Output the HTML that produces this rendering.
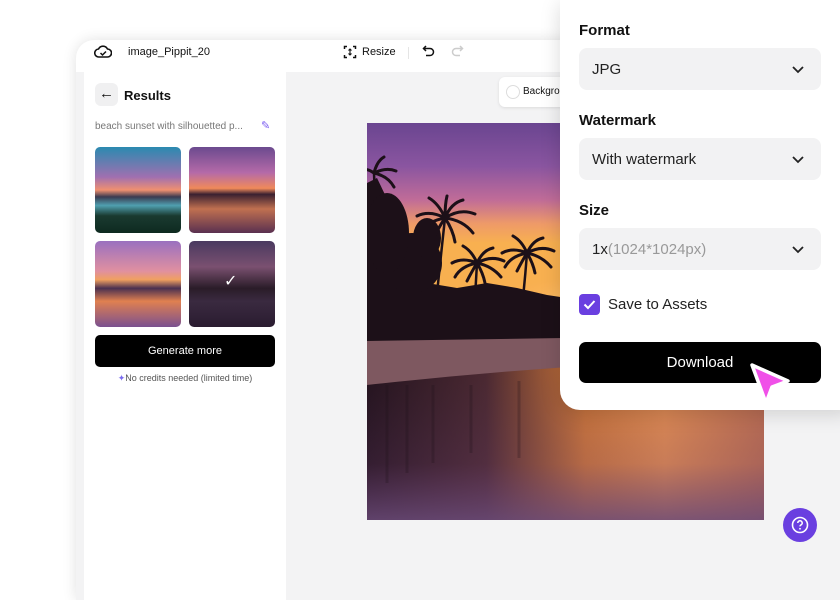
<!DOCTYPE html>
<html><head><style>
*{margin:0;padding:0;box-sizing:border-box}
body{width:840px;height:560px;background:#fff;font-family:"Liberation Sans",sans-serif;position:relative;overflow:hidden;color:#111}
.win{position:absolute;left:76px;top:40px;width:800px;height:560px;background:#f3f3f4;border-radius:18px 0 0 0;box-shadow:0 0 14px rgba(0,0,0,.12);overflow:hidden}
.hdr{position:absolute;left:0;top:0;right:0;height:32px;background:#fff}
.left{position:absolute;left:8px;top:32px;width:202px;bottom:0;background:#fff}
.thumb{position:absolute;width:86px;height:86px;border-radius:5px;overflow:hidden}
.pop{position:absolute;left:560px;top:0;width:290px;height:410px;background:#fff;border-radius:0 0 0 20px;box-shadow:0 4px 20px rgba(0,0,0,.15)}
.lbl{position:absolute;left:19px;font-size:15px;font-weight:bold;color:#111}
.sel{position:absolute;left:19px;width:242px;height:42px;background:#f2f2f3;border-radius:8px;font-size:15px;padding:13px 13px;color:#222}
.chev{position:absolute;right:16px;top:14px}
</style></head><body>
<div class="win">
 <div class="hdr">
  <svg style="position:absolute;left:18px;top:4px" width="18" height="16" viewBox="0 0 18 16"><path d="M5 13a4 4 0 0 1-.5-8A5 5 0 0 1 13.5 5a4 4 0 0 1 0 8z" fill="none" stroke="#111" stroke-width="1.6"/><path d="M6.5 9l2 2 3.5-3.5" fill="none" stroke="#111" stroke-width="1.5"/></svg>
  <div style="position:absolute;left:52px;top:6px;font-size:11px">image_Pippit_20</div>
  <svg style="position:absolute;left:267px;top:5px" width="14" height="14"><path d="M1.5 4V1.5H4M10 1.5h2.5V4M1.5 10v2.5H4M10 12.5h2.5V10" fill="none" stroke="#111" stroke-width="1.5"/><path d="M7 4v6M5.5 5.5L7 4l1.5 1.5M5.5 8.5L7 10l1.5-1.5" fill="none" stroke="#111" stroke-width="1.1"/></svg>
  <div style="position:absolute;left:286px;top:6px;font-size:11px">Resize</div>
  <div style="position:absolute;left:332px;top:7px;width:1px;height:12px;background:#e5e5e5"></div>
  <svg style="position:absolute;left:346px;top:4px" width="14" height="14"><path d="M4 2L1.5 4.5 4 7M1.5 4.5H8a3.5 3.5 0 0 1 0 7H4" fill="none" stroke="#111" stroke-width="1.5"/></svg>
  <svg style="position:absolute;left:374px;top:4px" width="14" height="14"><path d="M10 2l2.5 2.5L10 7M12.5 4.5H6a3.5 3.5 0 0 0 0 7h4" fill="none" stroke="#ccc" stroke-width="1.5"/></svg>
 </div>
 <div class="left">
  <div style="position:absolute;left:11px;top:11px;width:23px;height:23px;background:#f0f0f1;border-radius:6px;font-size:15px;text-align:center;line-height:22px">←</div>
  <div style="position:absolute;left:40px;top:16px;font-size:13px;font-weight:bold">Results</div>
  <div style="position:absolute;left:11px;top:49px;font-size:10px;color:#777">beach sunset with silhouetted p...</div>
  <div style="position:absolute;left:177px;top:47px;font-size:11px;color:#7a5cf0">✎</div>
  <div class="thumb" style="left:11px;top:75px;background:linear-gradient(180deg,#2a8ab0 0%,#a070b0 35%,#f09070 50%,#3a3a50 58%,#50a0b0 68%,#1a3a30 80%,#0e2a20 100%)"></div>
  <div class="thumb" style="left:105px;top:75px;background:linear-gradient(180deg,#6b4a8e 0%,#b56aa8 30%,#f08a5a 48%,#3a2030 55%,#c07050 72%,#5a3050 100%)"></div>
  <div class="thumb" style="left:11px;top:169px;background:linear-gradient(180deg,#9a70c0 0%,#e090a0 35%,#f0a060 45%,#4a3050 55%,#e08050 70%,#7a5090 100%)"></div>
  <div class="thumb" style="left:105px;top:169px;background:linear-gradient(180deg,#4a3a60 0%,#7a5070 30%,#2a1c28 55%,#3a2a40 70%,#2a1c30 100%)"><div style="position:absolute;left:35px;top:30px;color:#fff;font-size:16px">✓</div></div>
  <div style="position:absolute;left:11px;top:263px;width:180px;height:32px;background:#000;border-radius:5px;color:#fff;font-size:11px;text-align:center;line-height:32px">Generate more</div>
  <div style="position:absolute;left:0;width:202px;top:301px;font-size:9px;color:#555;text-align:center"><span style="color:#7a6cf0">✦</span>No credits needed (limited time)</div>
 </div>
 <div style="position:absolute;left:423px;top:37px;width:100px;height:30px;background:#fff;border-radius:6px;box-shadow:0 1px 3px rgba(0,0,0,.1)"><div style="position:absolute;left:7px;top:8px;width:14px;height:14px;border:1px solid #ddd;border-radius:50%"></div><div style="position:absolute;left:24px;top:9px;font-size:10px">Background</div></div>
</div>
<svg style="position:absolute;left:367px;top:123px" width="397" height="397">
 <defs>
  <linearGradient id="sky" x1="0" y1="0" x2="0" y2="1"><stop offset="0" stop-color="#6a4590"/><stop offset=".18" stop-color="#8a55a0"/><stop offset=".32" stop-color="#c06c98"/><stop offset=".42" stop-color="#ee9a68"/><stop offset=".5" stop-color="#f8b050"/></linearGradient>
  <linearGradient id="wat" x1="0" y1="0" x2="1" y2="0"><stop offset="0" stop-color="#22121c"/><stop offset=".3" stop-color="#4a2830"/><stop offset=".55" stop-color="#d07838"/><stop offset=".75" stop-color="#e89050"/><stop offset="1" stop-color="#c07050"/></linearGradient>
  <linearGradient id="wv" x1="0" y1="0" x2="0" y2="1"><stop offset="0" stop-color="#5a3a60" stop-opacity="0"/><stop offset=".65" stop-color="#6a4070" stop-opacity=".25"/><stop offset="1" stop-color="#6a4a78" stop-opacity=".85"/></linearGradient>
  <radialGradient id="sun" cx=".5" cy=".5" r=".5"><stop offset="0" stop-color="#ffe08a"/><stop offset="1" stop-color="#ffb060" stop-opacity="0"/></radialGradient>
 </defs>
 <rect width="397" height="240" fill="url(#sky)"/>
 <ellipse cx="260" cy="185" rx="140" ry="35" fill="url(#sun)"/>
 <rect y="236" width="397" height="161" fill="url(#wat)"/>
 <rect y="236" width="397" height="161" fill="url(#wv)"/>
 <path d="M0 214 L397 210 L397 234 Q200 240 0 262Z" fill="#7e5860"/>
 <path d="M0 60 L10 55 L22 80 L25 150 L60 160 L90 165 L120 160 L150 165 L180 172 L220 178 L260 185 L300 190 L350 195 L397 198 L397 212 L0 218Z" fill="#1c1018"/>
 <g fill="#1c1018"><ellipse cx="45" cy="140" rx="30" ry="30"/><ellipse cx="20" cy="110" rx="22" ry="40"/><ellipse cx="60" cy="115" rx="14" ry="20"/></g>
 <g fill="none" stroke="#1c1018" stroke-linecap="round">
  <g stroke-width="2.5"><path d="M78 95 Q72 150 66 210"/><path d="M110 140 Q108 180 104 215"/><path d="M160 130 Q157 170 152 210"/><path d="M7 50 Q10 120 6 210"/></g>
  <g stroke-width="3">
   <path d="M78 95 q-15 -8 -28 -2 M78 95 q15 -10 30 -4 M78 95 q-6 -14 -16 -20 M78 95 q6 -15 18 -18 M78 95 q18 2 28 15 M78 95 q-18 3 -26 16 M78 95 q8 12 10 24 M78 95 q-8 12 -12 22 M78 95 q0 -14 2 -22"/>
   <path d="M110 140 q-14 -6 -25 0 M110 140 q14 -8 27 -2 M110 140 q-5 -12 -14 -17 M110 140 q6 -13 16 -15 M110 140 q15 3 24 14 M110 140 q-16 3 -22 14 M110 140 q6 10 8 20 M110 140 q-6 10 -10 18"/>
   <path d="M160 130 q-14 -6 -25 0 M160 130 q14 -8 27 -2 M160 130 q-5 -12 -14 -17 M160 130 q6 -13 16 -15 M160 130 q15 3 24 14 M160 130 q-16 3 -22 14 M160 130 q6 10 8 20 M160 130 q-6 10 -10 18"/>
   <path d="M7 50 q-8 -6 -15 -2 M7 50 q12 -6 22 -2 M7 50 q14 3 20 14 M7 50 q3 -12 10 -16"/>
  </g>
 </g>
 <g stroke="#1c1018" stroke-opacity=".25" stroke-width="3"><path d="M66 262 V340 M104 262 V330 M152 258 V335 M20 262 V360 M40 262 V350"/></g>
</svg>
<div style="position:absolute;left:783px;top:508px;width:34px;height:34px;border-radius:50%;background:#6a3fe0"><svg width="34" height="34"><circle cx="17" cy="17" r="7.5" fill="none" stroke="#fff" stroke-width="1.6"/><path d="M14.8 15a2.2 2.2 0 1 1 3 2c-.6.3-.8.7-.8 1.4" fill="none" stroke="#fff" stroke-width="1.5"/><circle cx="17" cy="20.8" r=".9" fill="#fff"/></svg></div>
<div class="pop">
 <div class="lbl" style="top:22px">Format</div>
 <div class="sel" style="top:48px">JPG<svg class="chev" width="14" height="14"><path d="M2 5l5 5 5-5" fill="none" stroke="#222" stroke-width="1.8"/></svg></div>
 <div class="lbl" style="top:112px">Watermark</div>
 <div class="sel" style="top:138px">With watermark<svg class="chev" width="14" height="14"><path d="M2 5l5 5 5-5" fill="none" stroke="#222" stroke-width="1.8"/></svg></div>
 <div class="lbl" style="top:202px">Size</div>
 <div class="sel" style="top:228px">1x<span style="color:#999">(1024*1024px)</span><svg class="chev" width="14" height="14"><path d="M2 5l5 5 5-5" fill="none" stroke="#222" stroke-width="1.8"/></svg></div>
 <div style="position:absolute;left:19px;top:294px;width:21px;height:21px;border-radius:4px;background:#6a3fe0"><svg width="21" height="21"><path d="M5.5 10.5l3.5 3.5 6.5-7" fill="none" stroke="#fff" stroke-width="2"/></svg></div>
 <div style="position:absolute;left:48px;top:296px;font-size:15px;color:#222">Save to Assets</div>
 <div style="position:absolute;left:19px;top:342px;width:242px;height:41px;background:#000;border-radius:7px;color:#fff;font-size:15px;text-align:center;line-height:41px">Download</div>
</div>
<svg style="position:absolute;left:742px;top:357px" width="56" height="58"><path d="M10 8 L46 24 L30 30 L24 46 Z" fill="#f050e8" stroke="#fff" stroke-width="3.5" stroke-linejoin="round"/></svg>
</body></html>
